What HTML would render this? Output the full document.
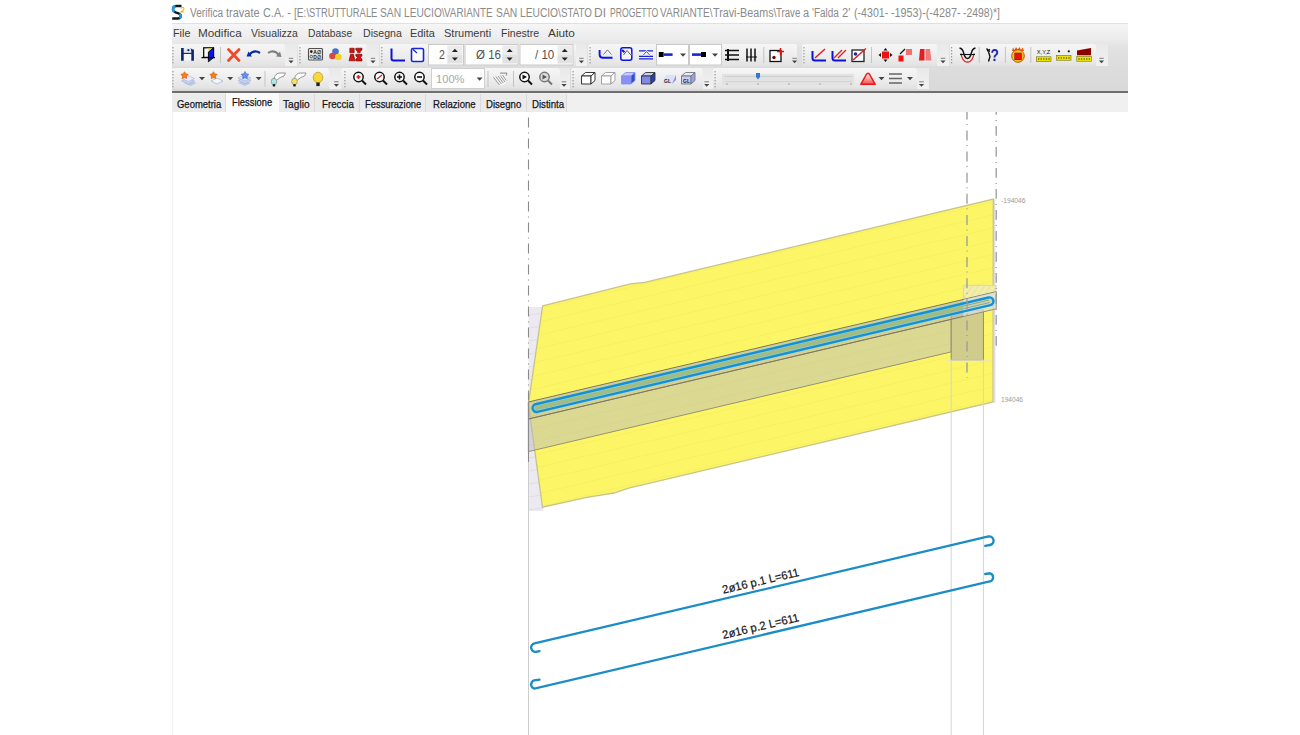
<!DOCTYPE html><html><head><meta charset="utf-8"><style>
html,body{margin:0;padding:0;width:1300px;height:735px;overflow:hidden;background:#fff;}
body{position:relative;font-family:"Liberation Sans", sans-serif;}
.t{position:absolute;white-space:pre;transform-origin:0 0;line-height:1;}
.a{position:absolute;}
svg{position:absolute;left:0;top:0;}
</style></head><body>
<div class="a" style="left:172px;top:0;width:956px;height:23px;background:#fff;"></div>
<div class="a" style="left:172px;top:23px;width:956px;height:68px;background:linear-gradient(#f6f6f6 0px,#ececec 14px,#e2e2e2 24px,#dddddd 40px,#d9d9d9 68px);border-top:1px solid #e0e0e0;box-sizing:border-box;"></div>
<div class="a" style="left:172px;top:91px;width:956px;height:2px;background:#6e6e6e;"></div>
<div class="a" style="left:172px;top:93px;width:956px;height:19px;background:#f0f0f0;"></div>
<div class="a" style="left:172px;top:112px;width:1px;height:623px;background:#f0f0f0;"></div>
<div class="a" style="left:172px;top:44px;width:113px;height:22px;background:linear-gradient(#f6f6f6,#ececec 60%,#e2e2e2);border-radius:2px;"></div>
<div class="a" style="left:298px;top:44px;width:69px;height:22px;background:linear-gradient(#f6f6f6,#ececec 60%,#e2e2e2);border-radius:2px;"></div>
<div class="a" style="left:380px;top:44px;width:196px;height:22px;background:linear-gradient(#f6f6f6,#ececec 60%,#e2e2e2);border-radius:2px;"></div>
<div class="a" style="left:588px;top:44px;width:209px;height:22px;background:linear-gradient(#f6f6f6,#ececec 60%,#e2e2e2);border-radius:2px;"></div>
<div class="a" style="left:802px;top:44px;width:135px;height:22px;background:linear-gradient(#f6f6f6,#ececec 60%,#e2e2e2);border-radius:2px;"></div>
<div class="a" style="left:950px;top:44px;width:146px;height:22px;background:linear-gradient(#f6f6f6,#ececec 60%,#e2e2e2);border-radius:2px;"></div>
<div class="a" style="left:285px;top:44px;width:12px;height:22px;background:linear-gradient(#e9e9e9,#f1f1f1);"></div>
<div class="a" style="left:367px;top:44px;width:12px;height:22px;background:linear-gradient(#e9e9e9,#f1f1f1);"></div>
<div class="a" style="left:576px;top:44px;width:11px;height:22px;background:linear-gradient(#e9e9e9,#f1f1f1);"></div>
<div class="a" style="left:937px;top:44px;width:12px;height:22px;background:linear-gradient(#e9e9e9,#f1f1f1);"></div>
<div class="a" style="left:1096px;top:44px;width:12px;height:22px;background:linear-gradient(#e9e9e9,#f1f1f1);"></div>
<div class="a" style="left:172px;top:68px;width:157px;height:21px;background:linear-gradient(#f6f6f6,#ececec 60%,#e2e2e2);border-radius:2px;"></div>
<div class="a" style="left:341px;top:68px;width:219px;height:21px;background:linear-gradient(#f6f6f6,#ececec 60%,#e2e2e2);border-radius:2px;"></div>
<div class="a" style="left:571px;top:68px;width:132px;height:21px;background:linear-gradient(#f6f6f6,#ececec 60%,#e2e2e2);border-radius:2px;"></div>
<div class="a" style="left:713px;top:68px;width:204px;height:21px;background:linear-gradient(#f6f6f6,#ececec 60%,#e2e2e2);border-radius:2px;"></div>
<div class="a" style="left:329px;top:68px;width:12px;height:21px;background:linear-gradient(#e9e9e9,#f1f1f1);"></div>
<div class="a" style="left:560px;top:68px;width:10px;height:21px;background:linear-gradient(#e9e9e9,#f1f1f1);"></div>
<div class="a" style="left:703px;top:68px;width:10px;height:21px;background:linear-gradient(#e9e9e9,#f1f1f1);"></div>
<div class="a" style="left:917px;top:68px;width:12px;height:21px;background:linear-gradient(#e9e9e9,#f1f1f1);"></div>
<svg width="1300" height="735" viewBox="0 0 1300 735" style="z-index:2"><rect x="172.3" y="47" width="1.2" height="1.4" fill="#9a9a9a"/><rect x="172.3" y="50" width="1.2" height="1.4" fill="#9a9a9a"/><rect x="172.3" y="53" width="1.2" height="1.4" fill="#9a9a9a"/><rect x="172.3" y="56" width="1.2" height="1.4" fill="#9a9a9a"/><rect x="172.3" y="59" width="1.2" height="1.4" fill="#9a9a9a"/><rect x="172.3" y="62" width="1.2" height="1.4" fill="#9a9a9a"/><rect x="183" y="48.5" width="9.5" height="12" fill="#f4f6fa"/><rect x="183.5" y="48.5" width="8" height="4.8" fill="#dfe8f4"/><path d="M182.4,48 V60.8 M192.6,49.5 V60.8" stroke="#0c2470" stroke-width="2.6"/><path d="M190.5,48 L194,51 L191.5,51 Z" fill="#0c2470"/><line x1="183" y1="53.4" x2="192" y2="53.4" stroke="#0c2470" stroke-width="1.1"/><circle cx="188.4" cy="50.2" r="1.1" fill="#0c2470"/><rect x="203.7" y="47.8" width="9.8" height="9.6" fill="#f8f8ff" stroke="#000" stroke-width="1.2"/><path d="M206.5,48.4 L211.5,48.4 L209.5,50.8 Z" fill="#f0f000"/><path d="M208.4,52 L213.6,47.8 V57.6 L208.4,61.8 Z" fill="#0a14f0" stroke="#000" stroke-width="0.9"/><line x1="201.5" y1="57.6" x2="215" y2="57.6" stroke="#000" stroke-width="1.3"/><line x1="220.5" y1="47" x2="220.5" y2="63" stroke="#c4c4c4" stroke-width="1"/><path d="M228.5,49.5 L239,60.5 M239,49.5 L228.5,60.5" stroke="#f04a2a" stroke-width="2.8" stroke-linecap="round"/><path d="M249,55 Q254,49 260,53" fill="none" stroke="#0c2c9a" stroke-width="2.2"/><path d="M246.5,56.5 L252,56.5 L248.5,51.5 Z" fill="#0c2c9a"/><path d="M268,53 Q274,49 279,55" fill="none" stroke="#808080" stroke-width="2"/><path d="M281.5,57 L276,56.5 L280,51.5 Z" fill="#808080"/><line x1="288.7" y1="58.3" x2="293.3" y2="58.3" stroke="#666" stroke-width="0.8"/><path d="M288.4,60.4 L293.6,60.4 L291,63.3 Z" fill="#444"/><rect x="299.3" y="47" width="1.2" height="1.4" fill="#9a9a9a"/><rect x="299.3" y="50" width="1.2" height="1.4" fill="#9a9a9a"/><rect x="299.3" y="53" width="1.2" height="1.4" fill="#9a9a9a"/><rect x="299.3" y="56" width="1.2" height="1.4" fill="#9a9a9a"/><rect x="299.3" y="59" width="1.2" height="1.4" fill="#9a9a9a"/><rect x="299.3" y="62" width="1.2" height="1.4" fill="#9a9a9a"/><rect x="308.5" y="48.5" width="14" height="11.5" rx="1" fill="#e6e6e6" stroke="#505050" stroke-width="1.1"/><circle cx="311.3" cy="51.6" r="1.3" fill="#111"/><circle cx="311.3" cy="56.6" r="1.3" fill="none" stroke="#222" stroke-width="0.7"/><text x="313.3" y="53.6" font-family="Liberation Sans" font-weight="bold" font-size="5" fill="#111" textLength="7.5" lengthAdjust="spacingAndGlyphs">A∅</text><text x="313.3" y="58.6" font-family="Liberation Sans" font-weight="bold" font-size="5" fill="#222" textLength="7.5" lengthAdjust="spacingAndGlyphs">D∅</text><circle cx="335.5" cy="51.5" r="3.3" fill="#4a70c8"/><circle cx="332.5" cy="56" r="3.3" fill="#d84848"/><circle cx="338.5" cy="57" r="3.3" fill="#f2d420"/><path d="M349.8,48.2 h4.4 v4.6 h-4.4 z M350.5,54.3 h3 l1.5,6.5 h-6 z M355.8,48.2 h6.2 v1.8 l-1.8,1.5 v1.3 h-2.6 v-1.3 l-1.8,-1.5 z M355.8,54.3 h6.2 v1.6 l-1.8,1.6 l1.8,1.6 v1.9 h-6.2 v-1.9 l1.8,-1.6 l-1.8,-1.6 z" fill="#e80a0a" stroke="#300" stroke-width="0.5"/><line x1="370.7" y1="58.3" x2="375.3" y2="58.3" stroke="#666" stroke-width="0.8"/><path d="M370.4,60.4 L375.6,60.4 L373,63.3 Z" fill="#444"/><rect x="381.2" y="47" width="1.2" height="1.4" fill="#9a9a9a"/><rect x="381.2" y="50" width="1.2" height="1.4" fill="#9a9a9a"/><rect x="381.2" y="53" width="1.2" height="1.4" fill="#9a9a9a"/><rect x="381.2" y="56" width="1.2" height="1.4" fill="#9a9a9a"/><rect x="381.2" y="59" width="1.2" height="1.4" fill="#9a9a9a"/><rect x="381.2" y="62" width="1.2" height="1.4" fill="#9a9a9a"/><path d="M391.5,48.5 V58.5 Q391.5,60.5 393.5,60.5 H405" fill="none" stroke="#0a14d8" stroke-width="2"/><rect x="411.5" y="48.5" width="12" height="13" rx="1.5" fill="#fff" stroke="#1428d0" stroke-width="1.6"/><path d="M413,49.5 L417,53" stroke="#1428d0" stroke-width="1.2"/><rect x="428.5" y="44.5" width="35" height="20.5" fill="#fff" stroke="#c9c9c9" stroke-width="1"/><rect x="447.3" y="45.5" width="15.199999999999989" height="9" fill="#ececec"/><rect x="447.3" y="54.5" width="15.199999999999989" height="9" fill="#e2e2e2"/><path d="M451.9,52 L457.9,52 L454.9,48.8 Z" fill="#222"/><path d="M451.9,57.5 L457.9,57.5 L454.9,60.7 Z" fill="#222"/><rect x="465.0" y="44.5" width="53.0" height="20.5" fill="#fff" stroke="#c9c9c9" stroke-width="1"/><rect x="502.3" y="45.5" width="14.699999999999989" height="9" fill="#ececec"/><rect x="502.3" y="54.5" width="14.699999999999989" height="9" fill="#e2e2e2"/><path d="M506.65,52 L512.65,52 L509.65,48.8 Z" fill="#222"/><path d="M506.65,57.5 L512.65,57.5 L509.65,60.7 Z" fill="#222"/><rect x="520.0" y="44.5" width="53.0" height="20.5" fill="#fff" stroke="#c9c9c9" stroke-width="1"/><rect x="557.5" y="45.5" width="14.5" height="9" fill="#ececec"/><rect x="557.5" y="54.5" width="14.5" height="9" fill="#e2e2e2"/><path d="M561.75,52 L567.75,52 L564.75,48.8 Z" fill="#222"/><path d="M561.75,57.5 L567.75,57.5 L564.75,60.7 Z" fill="#222"/><line x1="579.1" y1="58.3" x2="583.6999999999999" y2="58.3" stroke="#666" stroke-width="0.8"/><path d="M578.8,60.4 L584.0,60.4 L581.4,63.3 Z" fill="#444"/><rect x="589.5" y="47" width="1.2" height="1.4" fill="#9a9a9a"/><rect x="589.5" y="50" width="1.2" height="1.4" fill="#9a9a9a"/><rect x="589.5" y="53" width="1.2" height="1.4" fill="#9a9a9a"/><rect x="589.5" y="56" width="1.2" height="1.4" fill="#9a9a9a"/><rect x="589.5" y="59" width="1.2" height="1.4" fill="#9a9a9a"/><rect x="589.5" y="62" width="1.2" height="1.4" fill="#9a9a9a"/><path d="M599.6,50 V54.5 Q599.6,57.8 603,57.8 H612.5" fill="none" stroke="#0a14e8" stroke-width="1.9"/><path d="M603.5,54.5 L607.5,49.8 L611.5,54.5" fill="none" stroke="#fff" stroke-width="2.2"/><path d="M603.5,54.5 L607.5,49.8 L611.5,54.5" fill="none" stroke="#555" stroke-width="0.9"/><rect x="620.8" y="47.8" width="11" height="12.5" rx="2" fill="#f4f4fa" stroke="#0a14e0" stroke-width="1.5"/><path d="M622,50 L625.5,53" stroke="#0a14e0" stroke-width="2.2"/><path d="M623.5,55 L627,50.5 L631,55" fill="none" stroke="#fff" stroke-width="2"/><path d="M623.5,55 L627,50.5 L631,55" fill="none" stroke="#444" stroke-width="0.9"/><path d="M639,50.8 h14 M639,56.3 h14 M639,58.8 h14" stroke="#1a22d8" stroke-width="1.3"/><path d="M643,55.5 L646.5,51.5 L650,55.5" fill="none" stroke="#fff" stroke-width="2"/><path d="M643,55.5 L646.5,51.5 L650,55.5" fill="none" stroke="#444" stroke-width="0.9"/><rect x="656.5" y="44.5" width="32" height="20.5" fill="#fff" stroke="#c9c9c9"/><rect x="689.5" y="44.5" width="32" height="20.5" fill="#fff" stroke="#c9c9c9"/><rect x="658.8" y="52" width="4.8" height="5" fill="#000"/><rect x="663.6" y="53.3" width="9" height="2.6" fill="#1a28d0"/><path d="M680,53.5 L686,53.5 L683,56.8 Z" fill="#444"/><rect x="692" y="53.3" width="9" height="2.6" fill="#1a28d0"/><rect x="701" y="52" width="5" height="5" fill="#000"/><path d="M712,53.5 L718,53.5 L715,56.8 Z" fill="#444"/><path d="M725,50.5 h14 M725,55 h14 M725,59.5 h14" stroke="#111" stroke-width="1.5"/><path d="M728,49 v12" stroke="#111" stroke-width="2"/><path d="M747,48.5 v13 M751,48.5 v13 M755,48.5 v13" stroke="#111" stroke-width="1.5"/><path d="M746,57 h11" stroke="#111" stroke-width="1"/><line x1="763.8" y1="47" x2="763.8" y2="63" stroke="#c4c4c4" stroke-width="1"/><rect x="770" y="50.5" width="11" height="11" fill="#fff" stroke="#111" stroke-width="1.3"/><circle cx="774" cy="57.5" r="1.7" fill="#700"/><path d="M780.5,48 v7 M777,51.5 h7" stroke="#e01010" stroke-width="1.5"/><line x1="792.3000000000001" y1="58.3" x2="796.9" y2="58.3" stroke="#666" stroke-width="0.8"/><path d="M792.0,60.4 L797.2,60.4 L794.6,63.3 Z" fill="#444"/><rect x="803.3" y="47" width="1.2" height="1.4" fill="#9a9a9a"/><rect x="803.3" y="50" width="1.2" height="1.4" fill="#9a9a9a"/><rect x="803.3" y="53" width="1.2" height="1.4" fill="#9a9a9a"/><rect x="803.3" y="56" width="1.2" height="1.4" fill="#9a9a9a"/><rect x="803.3" y="59" width="1.2" height="1.4" fill="#9a9a9a"/><rect x="803.3" y="62" width="1.2" height="1.4" fill="#9a9a9a"/><path d="M812.5,51 V58 Q812.5,60.5 815,60.5 H826" fill="none" stroke="#0a14d8" stroke-width="2"/><path d="M815,58 L825,49" stroke="#e02020" stroke-width="1.5"/><path d="M832.5,51 V58 Q832.5,60.5 835,60.5 H846" fill="none" stroke="#0a14d8" stroke-width="2"/><path d="M834,58 L842,50 M838,58 L846,50" stroke="#e02020" stroke-width="1.3"/><rect x="852" y="50" width="12" height="11.5" fill="#fff" stroke="#222" stroke-width="1.3"/><circle cx="855.5" cy="54" r="1.8" fill="#1030a0"/><path d="M853,60 L866,48.5" stroke="#e02020" stroke-width="1.6"/><line x1="871.5" y1="47" x2="871.5" y2="63" stroke="#c4c4c4" stroke-width="1"/><rect x="882" y="51.5" width="7" height="7" fill="#f01010"/><path d="M885.5,48 l-2,2.5 h4 z M885.5,62 l-2,-2.5 h4 z M878.5,55 l2.5,-2 v4 z M892.5,55 l-2.5,-2 v4 z" fill="#111"/><rect x="898.5" y="55.5" width="5" height="6" fill="#f01010"/><rect x="906" y="49" width="6" height="6" fill="#f07070"/><path d="M900,54 L905,49" stroke="#111" stroke-width="1.3"/><path d="M919,60.5 L920,49 H924.5 V60.5 Z" fill="#e02020"/><path d="M925.5,60.5 V49 H930 L931.5,60.5 Z" fill="#f07a7a"/><line x1="940.7" y1="58.3" x2="945.3" y2="58.3" stroke="#666" stroke-width="0.8"/><path d="M940.4,60.4 L945.6,60.4 L943,63.3 Z" fill="#444"/><rect x="951.0" y="47" width="1.2" height="1.4" fill="#9a9a9a"/><rect x="951.0" y="50" width="1.2" height="1.4" fill="#9a9a9a"/><rect x="951.0" y="53" width="1.2" height="1.4" fill="#9a9a9a"/><rect x="951.0" y="56" width="1.2" height="1.4" fill="#9a9a9a"/><rect x="951.0" y="59" width="1.2" height="1.4" fill="#9a9a9a"/><rect x="951.0" y="62" width="1.2" height="1.4" fill="#9a9a9a"/><path d="M961,53.5 Q962.5,62.5 967.5,62 Q972.5,62.5 974,53.5" fill="none" stroke="#e82020" stroke-width="1.3"/><path d="M959.5,48 Q962.5,48.5 963.5,52.5 Q965,58.5 967.5,58.5 Q970,58.5 971.5,52.5 Q972.5,48.5 975.5,48" fill="none" stroke="#111" stroke-width="1.4"/><path d="M960,54.5 h15" stroke="#111" stroke-width="1.1"/><line x1="979.2" y1="47" x2="979.2" y2="63" stroke="#c4c4c4" stroke-width="1"/><text x="990.5" y="61.5" font-family="Liberation Sans" font-weight="bold" font-size="16" fill="#1424b8" transform="translate(990.5,0) scale(0.85,1) translate(-990.5,0)">?</text><path d="M986.5,48.5 L989.5,52 M987,51 L990,49.5 M988.5,52 L990,56.5 L988.5,61.5" fill="none" stroke="#111" stroke-width="1.4"/><line x1="1005.4" y1="47" x2="1005.4" y2="63" stroke="#c4c4c4" stroke-width="1"/><path d="M1012,51 L1013,47.5 L1014.5,50 L1016,47 L1017.8,49.8 L1019.5,47 L1021,50 L1022.8,47.5 L1024,51 Z" fill="#f05010"/><circle cx="1018" cy="56" r="6.3" fill="#f8c818" stroke="#c04010" stroke-width="0.9"/><rect x="1014.8" y="53" width="6.6" height="6.8" fill="#f01010" stroke="#600" stroke-width="0.5"/><line x1="1030.8" y1="47" x2="1030.8" y2="63" stroke="#c4c4c4" stroke-width="1"/><text x="1036.8" y="54.3" font-family="Liberation Sans" font-size="6.2" fill="#111" textLength="13.5" lengthAdjust="spacingAndGlyphs">X,Y,Z</text><rect x="1036.5" y="56.8" width="14.5" height="4.6" fill="#f0e800" stroke="#707000" stroke-width="0.6"/><rect x="1038.0" y="58.099999999999994" width="1.3" height="2" fill="#8a7a00"/><rect x="1040.6" y="58.099999999999994" width="1.3" height="2" fill="#8a7a00"/><rect x="1043.2" y="58.099999999999994" width="1.3" height="2" fill="#8a7a00"/><rect x="1045.8" y="58.099999999999994" width="1.3" height="2" fill="#8a7a00"/><rect x="1048.4" y="58.099999999999994" width="1.3" height="2" fill="#8a7a00"/><circle cx="1059" cy="51.3" r="1.1" fill="#111"/><circle cx="1068.8" cy="51.3" r="1.1" fill="#111"/><rect x="1056.5" y="55.6" width="14.5" height="4.6" fill="#f0e800" stroke="#707000" stroke-width="0.6"/><rect x="1058.0" y="56.9" width="1.3" height="2" fill="#8a7a00"/><rect x="1060.6" y="56.9" width="1.3" height="2" fill="#8a7a00"/><rect x="1063.2" y="56.9" width="1.3" height="2" fill="#8a7a00"/><rect x="1065.8" y="56.9" width="1.3" height="2" fill="#8a7a00"/><rect x="1068.4" y="56.9" width="1.3" height="2" fill="#8a7a00"/><path d="M1077,50.5 L1091,48 V55.3 H1077 Z" fill="#8c0000"/><rect x="1076.8" y="56.6" width="14.5" height="4.6" fill="#f0e800" stroke="#707000" stroke-width="0.6"/><rect x="1078.3" y="57.9" width="1.3" height="2" fill="#8a7a00"/><rect x="1080.9" y="57.9" width="1.3" height="2" fill="#8a7a00"/><rect x="1083.5" y="57.9" width="1.3" height="2" fill="#8a7a00"/><rect x="1086.1" y="57.9" width="1.3" height="2" fill="#8a7a00"/><rect x="1088.7" y="57.9" width="1.3" height="2" fill="#8a7a00"/><line x1="1099.2" y1="58.3" x2="1103.8" y2="58.3" stroke="#666" stroke-width="0.8"/><path d="M1098.9,60.4 L1104.1,60.4 L1101.5,63.3 Z" fill="#444"/><rect x="172.3" y="71" width="1.2" height="1.4" fill="#9a9a9a"/><rect x="172.3" y="74" width="1.2" height="1.4" fill="#9a9a9a"/><rect x="172.3" y="77" width="1.2" height="1.4" fill="#9a9a9a"/><rect x="172.3" y="80" width="1.2" height="1.4" fill="#9a9a9a"/><rect x="172.3" y="83" width="1.2" height="1.4" fill="#9a9a9a"/><rect x="172.3" y="86" width="1.2" height="1.4" fill="#9a9a9a"/><path d="M183.5,83.0 l6,-3 l7,3 l-6,3 z" fill="#b8c8e8"/><path d="M181.5,81 l6,-3 l7,3 l-6,3 z" fill="#c8d4f0" stroke="#9fb0d8" stroke-width="0.6"/><path d="M181.5,78.5 l6,-3 l7,3 l-6,3 z" fill="#e8eef8" stroke="#9fb0d8" stroke-width="0.6"/><polygon points="184.50,71.70 185.73,73.81 188.11,74.33 186.49,76.15 186.73,78.57 184.50,77.59 182.27,78.57 182.51,76.15 180.89,74.33 183.27,73.81" fill="#f88010" stroke="#d04000" stroke-width="0.5"/><path d="M199,77.0 L205,77.0 L202,80.3 Z" fill="#444"/><path d="M211,81 l6,-3 l6,3 l-6,3 z" fill="#f4f6fc" stroke="#a8b8d8" stroke-width="0.8"/><polygon points="213.50,71.70 214.73,73.81 217.11,74.33 215.49,76.15 215.73,78.57 213.50,77.59 211.27,78.57 211.51,76.15 209.89,74.33 212.27,73.81" fill="#f88010" stroke="#d04000" stroke-width="0.5"/><path d="M227.2,77.0 L233.2,77.0 L230.2,80.3 Z" fill="#444"/><path d="M238,83 l6,-3 l7,3 l-6,3 z" fill="#b8c8e8"/><path d="M238,80.5 l6,-3 l7,3 l-6,3 z" fill="#c8d4f0" stroke="#9fb0d8" stroke-width="0.6"/><path d="M238,78 l6,-3 l7,3 l-6,3 z" fill="#dce6f8" stroke="#9fb0d8" stroke-width="0.6"/><polygon points="245.00,71.50 246.29,73.72 248.80,74.26 247.09,76.18 247.35,78.74 245.00,77.70 242.65,78.74 242.91,76.18 241.20,74.26 243.71,73.72" fill="#6890f0" stroke="#3050c0" stroke-width="0.5"/><path d="M255.7,77.0 L261.7,77.0 L258.7,80.3 Z" fill="#444"/><line x1="265" y1="71" x2="265" y2="87" stroke="#c4c4c4" stroke-width="1"/><path d="M274,79 Q275,73 280,73 H285.5 L284,76 Q280,77 277,80" fill="#fff" stroke="#8a8a8a" stroke-width="0.9"/><ellipse cx="274" cy="81.5" rx="2.8" ry="3.2" fill="#a8e8e8" stroke="#666" stroke-width="0.5"/><rect x="272.8" y="84.2" width="2.4" height="2.2" fill="#111"/><path d="M294.5,79 Q295.5,73 300.5,73 H306.0 L304.5,76 Q300.5,77 297.5,80" fill="#fff" stroke="#8a8a8a" stroke-width="0.9"/><ellipse cx="294.5" cy="81.5" rx="2.8" ry="3.2" fill="#f8e060" stroke="#666" stroke-width="0.5"/><rect x="293.3" y="84.2" width="2.4" height="2.2" fill="#111"/><ellipse cx="318" cy="77.5" rx="4.8" ry="5.3" fill="#f8d838" stroke="#b08010" stroke-width="0.6"/><rect x="316.3" y="82.5" width="3.4" height="3.6" fill="#222"/><line x1="334.09999999999997" y1="81.8" x2="338.7" y2="81.8" stroke="#666" stroke-width="0.8"/><path d="M333.79999999999995,83.89999999999999 L339.0,83.89999999999999 L336.4,86.8 Z" fill="#444"/><rect x="344.3" y="71" width="1.2" height="1.4" fill="#9a9a9a"/><rect x="344.3" y="74" width="1.2" height="1.4" fill="#9a9a9a"/><rect x="344.3" y="77" width="1.2" height="1.4" fill="#9a9a9a"/><rect x="344.3" y="80" width="1.2" height="1.4" fill="#9a9a9a"/><rect x="344.3" y="83" width="1.2" height="1.4" fill="#9a9a9a"/><rect x="344.3" y="86" width="1.2" height="1.4" fill="#9a9a9a"/><circle cx="358.5" cy="77" r="4.7" fill="#fff" stroke="#111" stroke-width="1.5"/><path d="M362,80.5 L366,84.5" stroke="#111" stroke-width="2"/><path d="M356.5,77 h4 M358.5,75 v4" stroke="#d02020" stroke-width="1.6"/><circle cx="379.5" cy="77" r="4.7" fill="#fff" stroke="#111" stroke-width="1.5"/><path d="M383,80.5 L387,84.5" stroke="#111" stroke-width="2"/><path d="M377,79 L382,75" stroke="#d02020" stroke-width="1.2"/><circle cx="399.5" cy="77" r="4.7" fill="#fff" stroke="#111" stroke-width="1.5"/><path d="M403,80.5 L407,84.5" stroke="#111" stroke-width="2"/><path d="M397,77 h5 M399.5,74.5 v5" stroke="#111" stroke-width="1.6"/><circle cx="419.5" cy="77" r="4.7" fill="#fff" stroke="#111" stroke-width="1.5"/><path d="M423,80.5 L427,84.5" stroke="#111" stroke-width="2"/><path d="M417,77 h5" stroke="#111" stroke-width="1.6"/><rect x="431.5" y="68.5" width="53" height="20" fill="#fff" stroke="#cfcfcf"/><path d="M476.6,77.5 L482.6,77.5 L479.6,80.8 Z" fill="#444"/><line x1="488" y1="71" x2="488" y2="87" stroke="#c4c4c4" stroke-width="1"/><path d="M493.5,77 L500,85.5 L504,85 L507,81 L506,77 L503,73.5 L500,74.5 Z" fill="#f4f4f4"/><path d="M493.5,77.3 L499.5,85 M495.8,76.5 L501.5,84 M498,76 L503.3,83 M500.3,75.5 L505,82 M502.5,75 L506.3,80.5" stroke="#8c8c8c" stroke-width="0.9"/><path d="M500,73.2 H506.5 V75.5" fill="none" stroke="#9a9a9a" stroke-width="1.3"/><line x1="513.5" y1="71" x2="513.5" y2="87" stroke="#c4c4c4" stroke-width="1"/><circle cx="524.5" cy="77" r="4.7" fill="#fff" stroke="#111" stroke-width="1.5"/><path d="M528,80.5 L532,84.5" stroke="#111" stroke-width="2"/><path d="M522.5,74.5 L527,77 L522.5,79.5 Z" fill="#111"/><circle cx="544.5" cy="77" r="4.7" fill="#ddd" stroke="#777" stroke-width="1.5"/><path d="M548,80.5 L552,84.5" stroke="#777" stroke-width="2"/><path d="M542.5,74.5 L547,77 L542.5,79.5 Z" fill="#555"/><line x1="561.7" y1="81.8" x2="566.3" y2="81.8" stroke="#666" stroke-width="0.8"/><path d="M561.4,83.89999999999999 L566.6,83.89999999999999 L564,86.8 Z" fill="#444"/><rect x="572.5" y="71" width="1.2" height="1.4" fill="#9a9a9a"/><rect x="572.5" y="74" width="1.2" height="1.4" fill="#9a9a9a"/><rect x="572.5" y="77" width="1.2" height="1.4" fill="#9a9a9a"/><rect x="572.5" y="80" width="1.2" height="1.4" fill="#9a9a9a"/><rect x="572.5" y="83" width="1.2" height="1.4" fill="#9a9a9a"/><rect x="572.5" y="86" width="1.2" height="1.4" fill="#9a9a9a"/><path d="M581.5,76 L585.5,72.5 H595.0 L591.0,76 Z" fill="#fff" stroke="#222" stroke-width="0.9"/><path d="M581.5,76 H591.0 V84 H581.5 Z" fill="#fff" stroke="#222" stroke-width="0.9"/><path d="M591.0,76 L595.0,72.5 V80.5 L591.0,84 Z" fill="#fff" stroke="#222" stroke-width="0.9"/><path d="M601.5,76 L605.5,72.5 H615.0 L611.0,76 Z" fill="#fff" stroke="#999" stroke-width="0.9"/><path d="M601.5,76 H611.0 V84 H601.5 Z" fill="#fff" stroke="#999" stroke-width="0.9"/><path d="M611.0,76 L615.0,72.5 V80.5 L611.0,84 Z" fill="#fff" stroke="#999" stroke-width="0.9"/><path d="M621.5,76 L625.5,72.5 H635.0 L631.0,76 Z" fill="#c8ccf8" stroke="#8890f0" stroke-width="0.9"/><path d="M621.5,76 H631.0 V84 H621.5 Z" fill="#8890f0" stroke="#8890f0" stroke-width="0.9"/><path d="M631.0,76 L635.0,72.5 V80.5 L631.0,84 Z" fill="#3050c8" stroke="#8890f0" stroke-width="0.9"/><path d="M641.5,76 L645.5,72.5 H655.0 L651.0,76 Z" fill="#c8ccf8" stroke="#333" stroke-width="0.9"/><path d="M641.5,76 H651.0 V84 H641.5 Z" fill="#8088e8" stroke="#333" stroke-width="0.9"/><path d="M651.0,76 L655.0,72.5 V80.5 L651.0,84 Z" fill="#2840b0" stroke="#333" stroke-width="0.9"/><path d="M662,84 L666,75 H676 L672,84 Z" fill="#dde0fa"/><path d="M672,84 L676,75 V80 Z" fill="#8890e8"/><text x="664" y="82.5" font-family="Liberation Sans" font-size="5" font-weight="bold" fill="#223">GL</text><path d="M681.5,76 L685.5,72.5 H695.0 L691.0,76 Z" fill="#e8eaf8" stroke="#777" stroke-width="0.9"/><path d="M681.5,76 H691.0 V84 H681.5 Z" fill="#c8ccf0" stroke="#777" stroke-width="0.9"/><path d="M691.0,76 L695.0,72.5 V80.5 L691.0,84 Z" fill="#9aa2e8" stroke="#777" stroke-width="0.9"/><text x="683" y="82.5" font-family="Liberation Sans" font-size="5" font-weight="bold" fill="#223">GL</text><line x1="704.4000000000001" y1="81.8" x2="709.0" y2="81.8" stroke="#666" stroke-width="0.8"/><path d="M704.1,83.89999999999999 L709.3000000000001,83.89999999999999 L706.7,86.8 Z" fill="#444"/><rect x="714.5" y="71" width="1.2" height="1.4" fill="#9a9a9a"/><rect x="714.5" y="74" width="1.2" height="1.4" fill="#9a9a9a"/><rect x="714.5" y="77" width="1.2" height="1.4" fill="#9a9a9a"/><rect x="714.5" y="80" width="1.2" height="1.4" fill="#9a9a9a"/><rect x="714.5" y="83" width="1.2" height="1.4" fill="#9a9a9a"/><rect x="714.5" y="86" width="1.2" height="1.4" fill="#9a9a9a"/><rect x="722" y="74" width="132" height="11" fill="#e2e2e2"/><line x1="725" y1="76.5" x2="852" y2="76.5" stroke="#cfcfcf"/><line x1="725" y1="81.5" x2="852" y2="81.5" stroke="#d4d4d4"/><line x1="727" y1="83" x2="727" y2="85" stroke="#9a9a9a" stroke-width="0.8"/><line x1="758" y1="83" x2="758" y2="85" stroke="#9a9a9a" stroke-width="0.8"/><line x1="789" y1="83" x2="789" y2="85" stroke="#9a9a9a" stroke-width="0.8"/><line x1="820" y1="83" x2="820" y2="85" stroke="#9a9a9a" stroke-width="0.8"/><line x1="851" y1="83" x2="851" y2="85" stroke="#9a9a9a" stroke-width="0.8"/><path d="M756,73 h4 v4 l-2,2.5 l-2,-2.5 z" fill="#2a78d8"/><defs><linearGradient id="tg" x1="0" y1="0" x2="0" y2="1"><stop offset="0" stop-color="#fff0f0"/><stop offset="1" stop-color="#f05050"/></linearGradient></defs><path d="M860.8,84.3 L866.3,74.5 Q868,71.8 869.7,74.5 L875.2,84.3 Z" fill="url(#tg)" stroke="#e81818" stroke-width="1.5" stroke-linejoin="round"/><path d="M878.5,77.0 L884.5,77.0 L881.5,80.3 Z" fill="#444"/><path d="M889,74 h13 M889,78.5 h13 M889,83 h13" stroke="#666" stroke-width="1.3"/><path d="M907,77.0 L913,77.0 L910,80.3 Z" fill="#444"/><line x1="919.2" y1="81.8" x2="923.8" y2="81.8" stroke="#666" stroke-width="0.8"/><path d="M918.9,83.89999999999999 L924.1,83.89999999999999 L921.5,86.8 Z" fill="#444"/></svg>
<div class="t" style="left:172.8px;top:27.9px;font-size:10.8px;color:#3c3c3c;transform:scaleX(0.9996);z-index:3;">File</div>
<div class="t" style="left:198.44px;top:27.9px;font-size:10.8px;color:#3c3c3c;transform:scaleX(1.0869);z-index:3;">Modifica</div>
<div class="t" style="left:251.02px;top:27.9px;font-size:10.8px;color:#3c3c3c;transform:scaleX(0.9677);z-index:3;">Visualizza</div>
<div class="t" style="left:308.13px;top:27.9px;font-size:10.8px;color:#3c3c3c;transform:scaleX(0.9547);z-index:3;">Database</div>
<div class="t" style="left:362.62px;top:27.9px;font-size:10.8px;color:#3c3c3c;transform:scaleX(0.9785);z-index:3;">Disegna</div>
<div class="t" style="left:409.89px;top:27.9px;font-size:10.8px;color:#3c3c3c;transform:scaleX(1.0125);z-index:3;">Edita</div>
<div class="t" style="left:443.89px;top:27.9px;font-size:10.8px;color:#3c3c3c;transform:scaleX(1.02);z-index:3;">Strumenti</div>
<div class="t" style="left:501.22px;top:27.9px;font-size:10.8px;color:#3c3c3c;transform:scaleX(0.9784);z-index:3;">Finestre</div>
<div class="t" style="left:547.73px;top:27.9px;font-size:10.8px;color:#3c3c3c;transform:scaleX(1.094);z-index:3;">Aiuto</div>
<div class="a" style="left:172px;top:94px;width:53.80000000000001px;height:17.5px;background:#ebebeb;border-right:1px solid #dadada;box-sizing:border-box;"></div>
<div class="t" style="left:177.1px;top:98.6px;font-size:11px;color:#15151c;transform:scaleX(0.861);z-index:3;-webkit-text-stroke:0.25px #15151c;">Geometria</div>
<div class="a" style="left:225.8px;top:93px;width:53.0px;height:19px;background:#fafafa;"></div>
<div class="t" style="left:232.3px;top:97.1px;font-size:11px;color:#15151c;transform:scaleX(0.8519);z-index:3;-webkit-text-stroke:0.25px #15151c;">Flessione</div>
<div class="a" style="left:278.8px;top:94px;width:36.599999999999966px;height:17.5px;background:#ebebeb;border-right:1px solid #dadada;box-sizing:border-box;"></div>
<div class="t" style="left:283.15px;top:98.6px;font-size:11px;color:#15151c;transform:scaleX(0.9253);z-index:3;-webkit-text-stroke:0.25px #15151c;">Taglio</div>
<div class="a" style="left:315.4px;top:94px;width:44.30000000000001px;height:17.5px;background:#ebebeb;border-right:1px solid #dadada;box-sizing:border-box;"></div>
<div class="t" style="left:321.68px;top:98.6px;font-size:11px;color:#15151c;transform:scaleX(0.8831);z-index:3;-webkit-text-stroke:0.25px #15151c;">Freccia</div>
<div class="a" style="left:359.7px;top:94px;width:66.69999999999999px;height:17.5px;background:#ebebeb;border-right:1px solid #dadada;box-sizing:border-box;"></div>
<div class="t" style="left:365.0px;top:98.6px;font-size:11px;color:#15151c;transform:scaleX(0.8525);z-index:3;-webkit-text-stroke:0.25px #15151c;">Fessurazione</div>
<div class="a" style="left:426.4px;top:94px;width:54.60000000000002px;height:17.5px;background:#ebebeb;border-right:1px solid #dadada;box-sizing:border-box;"></div>
<div class="t" style="left:432.59px;top:98.6px;font-size:11px;color:#15151c;transform:scaleX(0.8714);z-index:3;-webkit-text-stroke:0.25px #15151c;">Relazione</div>
<div class="a" style="left:481px;top:94px;width:46px;height:17.5px;background:#ebebeb;border-right:1px solid #dadada;box-sizing:border-box;"></div>
<div class="t" style="left:485.99px;top:98.6px;font-size:11px;color:#15151c;transform:scaleX(0.873);z-index:3;-webkit-text-stroke:0.25px #15151c;">Disegno</div>
<div class="a" style="left:527px;top:94px;width:40.299999999999955px;height:17.5px;background:#ebebeb;border-right:1px solid #dadada;box-sizing:border-box;"></div>
<div class="t" style="left:532.39px;top:98.6px;font-size:11px;color:#15151c;transform:scaleX(0.876);z-index:3;-webkit-text-stroke:0.25px #15151c;">Distinta</div>
<div class="t" style="left:190.0px;top:6.64px;font-size:12px;color:#8a8a8a;transform:scaleX(0.8408);z-index:3;">Verifica </div>
<div class="t" style="left:225.9px;top:6.64px;font-size:12px;color:#8a8a8a;transform:scaleX(0.9169);z-index:3;">travate </div>
<div class="t" style="left:262.6px;top:6.64px;font-size:12px;color:#8a8a8a;transform:scaleX(0.9086);z-index:3;">C.A. - </div>
<div class="t" style="left:293.5px;top:6.64px;font-size:12px;color:#8a8a8a;transform:scaleX(0.8435);z-index:3;">[E:\</div>
<div class="t" style="left:308.7px;top:6.64px;font-size:12px;color:#8a8a8a;transform:scaleX(0.7829);z-index:3;">STRUTTURALE </div>
<div class="t" style="left:379.7px;top:6.64px;font-size:12px;color:#8a8a8a;transform:scaleX(0.8569);z-index:3;">SAN </div>
<div class="t" style="left:403.7px;top:6.64px;font-size:12px;color:#8a8a8a;transform:scaleX(0.8455);z-index:3;">LEUCIO\</div>
<div class="t" style="left:444.3px;top:6.64px;font-size:12px;color:#8a8a8a;transform:scaleX(0.8197);z-index:3;">VARIANTE </div>
<div class="t" style="left:495.5px;top:6.64px;font-size:12px;color:#8a8a8a;transform:scaleX(0.8605);z-index:3;">SAN </div>
<div class="t" style="left:519.6px;top:6.64px;font-size:12px;color:#8a8a8a;transform:scaleX(0.8517);z-index:3;">LEUCIO\</div>
<div class="t" style="left:560.5px;top:6.64px;font-size:12px;color:#8a8a8a;transform:scaleX(0.8149);z-index:3;">STATO </div>
<div class="t" style="left:594.2px;top:6.64px;font-size:12px;color:#8a8a8a;transform:scaleX(0.9974);z-index:3;">DI </div>
<div class="t" style="left:609.5px;top:6.64px;font-size:12px;color:#8a8a8a;transform:scaleX(0.7195);z-index:3;">PROGETTO </div>
<div class="t" style="left:660.2px;top:6.64px;font-size:12px;color:#8a8a8a;transform:scaleX(0.8405);z-index:3;">VARIANTE\</div>
<div class="t" style="left:712.7px;top:6.64px;font-size:12px;color:#8a8a8a;transform:scaleX(0.8956);z-index:3;">Travi-Beams\</div>
<div class="t" style="left:776.2px;top:6.64px;font-size:12px;color:#8a8a8a;transform:scaleX(0.8043);z-index:3;">Trave </div>
<div class="t" style="left:803.2px;top:6.64px;font-size:12px;color:#8a8a8a;transform:scaleX(0.9194);z-index:3;">a </div>
<div class="t" style="left:812.4px;top:6.64px;font-size:12px;color:#8a8a8a;transform:scaleX(0.8302);z-index:3;">'Falda </div>
<div class="t" style="left:842.0px;top:6.64px;font-size:12px;color:#8a8a8a;transform:scaleX(0.934);z-index:3;">2' </div>
<div class="t" style="left:853.5px;top:6.64px;font-size:12px;color:#8a8a8a;transform:scaleX(0.8851);z-index:3;">(-4301- </div>
<div class="t" style="left:890.7px;top:6.64px;font-size:12px;color:#8a8a8a;transform:scaleX(0.8984);z-index:3;">-1953)-(-4287- </div>
<div class="t" style="left:963.2px;top:6.64px;font-size:12px;color:#8a8a8a;transform:scaleX(0.8665);z-index:3;">-2498)*]</div>
<div class="t" style="left:439.3px;top:48.6px;font-size:12.5px;color:#505050;transform:scaleX(0.85);z-index:3;">2</div>
<div class="t" style="left:475.8px;top:48.6px;font-size:12.5px;color:#505050;transform:scaleX(0.92);z-index:3;">Ø 16</div>
<div class="t" style="left:534.5px;top:48.6px;font-size:12.5px;color:#505050;transform:scaleX(0.92);z-index:3;">/ 10</div>
<div class="t" style="left:436px;top:73.6px;font-size:11.5px;color:#a8a8a8;transform:scaleX(0.97);z-index:3;">100%</div>
<svg width="1300" height="735" style="z-index:4"><path d="M181.5,6 H176.3 Q173,6 173,9.3 Q173,11.3 175.5,12.3 L178.5,13.3 Q180.8,14.2 180.8,16 Q180.8,18.5 177.5,18.5 H172.2" fill="none" stroke="#101820" stroke-width="2.4"/><path d="M175.5,6.2 Q173,6.6 173,9.3 Q173,11 174.5,11.8" fill="none" stroke="#1ea0e6" stroke-width="2.4"/><path d="M179.5,13.8 Q180.8,14.6 180.8,16 Q180.8,17.5 179.5,18.1" fill="none" stroke="#1ea0e6" stroke-width="2.4"/><path d="M180.8,8.6 Q181.3,7.3 182.6,7.3 Q184,7.3 184,8.6 Q184,9.8 182.3,11 L181,12 H184.3" fill="none" stroke="#e8b820" stroke-width="1.1"/></svg>
<svg width="1300" height="735" style="z-index:1"><rect x="528.5" y="307" width="15" height="204" fill="#eceaf0"/><line x1="528.5" y1="315" x2="543" y2="313" stroke="#dcdbe2" stroke-width="0.8"/><line x1="528.5" y1="328" x2="543" y2="326" stroke="#dcdbe2" stroke-width="0.8"/><line x1="528.5" y1="341" x2="543" y2="339" stroke="#dcdbe2" stroke-width="0.8"/><line x1="528.5" y1="354" x2="543" y2="352" stroke="#dcdbe2" stroke-width="0.8"/><line x1="528.5" y1="367" x2="543" y2="365" stroke="#dcdbe2" stroke-width="0.8"/><line x1="528.5" y1="380" x2="543" y2="378" stroke="#dcdbe2" stroke-width="0.8"/><line x1="528.5" y1="393" x2="543" y2="391" stroke="#dcdbe2" stroke-width="0.8"/><line x1="528.5" y1="406" x2="543" y2="404" stroke="#dcdbe2" stroke-width="0.8"/><line x1="528.5" y1="419" x2="543" y2="417" stroke="#dcdbe2" stroke-width="0.8"/><line x1="528.5" y1="432" x2="543" y2="430" stroke="#dcdbe2" stroke-width="0.8"/><line x1="528.5" y1="445" x2="543" y2="443" stroke="#dcdbe2" stroke-width="0.8"/><line x1="528.5" y1="458" x2="543" y2="456" stroke="#dcdbe2" stroke-width="0.8"/><line x1="528.5" y1="471" x2="543" y2="469" stroke="#dcdbe2" stroke-width="0.8"/><line x1="528.5" y1="484" x2="543" y2="482" stroke="#dcdbe2" stroke-width="0.8"/><line x1="528.5" y1="497" x2="543" y2="495" stroke="#dcdbe2" stroke-width="0.8"/><line x1="528.5" y1="510" x2="543" y2="508" stroke="#dcdbe2" stroke-width="0.8"/><defs><clipPath id="yc"><polygon points="542.6,305.9 630.5,283.8 644.8,282.4 993.3,199 993,402 628.6,488.2 613.8,493 586.8,497.4 542.5,507.2 528.4,404"/></clipPath></defs><polygon points="542.6,305.9 630.5,283.8 644.8,282.4 993.3,199 993,402 628.6,488.2 613.8,493 586.8,497.4 542.5,507.2 528.4,404" fill="#fcf666"/><path d="M520,-228.0 L1000,-341.2 M520,-214.8 L1000,-328.0 M520,-201.6 L1000,-314.8 M520,-188.4 L1000,-301.6 M520,-175.2 L1000,-288.4 M520,-162.0 L1000,-275.2 M520,-148.8 L1000,-262.0 M520,-135.6 L1000,-248.8 M520,-122.4 L1000,-235.6 M520,-109.2 L1000,-222.4 M520,-96.0 L1000,-209.2 M520,-82.8 L1000,-196.0 M520,-69.6 L1000,-182.8 M520,-56.4 L1000,-169.6 M520,-43.2 L1000,-156.4 M520,-30.0 L1000,-143.2 M520,-16.8 L1000,-130.0 M520,-3.6 L1000,-116.8 M520,9.6 L1000,-103.6 M520,22.8 L1000,-90.4 M520,36.0 L1000,-77.2 M520,49.2 L1000,-64.0 M520,62.4 L1000,-50.8 M520,75.6 L1000,-37.6 M520,88.8 L1000,-24.4 M520,102.0 L1000,-11.2 M520,115.2 L1000,2.0 M520,128.4 L1000,15.2 M520,141.6 L1000,28.4 M520,154.8 L1000,41.6 M520,168.0 L1000,54.8 M520,181.2 L1000,68.0 M520,194.4 L1000,81.2 M520,207.6 L1000,94.4 M520,220.8 L1000,107.6 M520,234.0 L1000,120.8 M520,247.2 L1000,134.0 M520,260.4 L1000,147.2 M520,273.6 L1000,160.4 M520,286.8 L1000,173.6 M520,300.0 L1000,186.8 M520,313.2 L1000,200.0 M520,326.4 L1000,213.2 M520,339.6 L1000,226.4 M520,352.8 L1000,239.6 M520,366.0 L1000,252.8 M520,379.2 L1000,266.0 M520,392.4 L1000,279.2 M520,405.6 L1000,292.4 M520,418.8 L1000,305.6 M520,432.0 L1000,318.8 M520,445.2 L1000,332.0 M520,458.4 L1000,345.2 M520,471.6 L1000,358.4 M520,484.8 L1000,371.6 M520,498.0 L1000,384.8 M520,511.2 L1000,398.0 M520,524.4 L1000,411.2 M520,537.6 L1000,424.4 M520,550.8 L1000,437.6 M520,564.0 L1000,450.8 M520,577.2 L1000,464.0 M520,590.4 L1000,477.2 M520,603.6 L1000,490.4 M520,616.8 L1000,503.6 M520,630.0 L1000,516.8 M520,643.2 L1000,530.0 M520,656.4 L1000,543.2 M520,669.6 L1000,556.4 M520,682.8 L1000,569.6 M520,696.0 L1000,582.8 M520,709.2 L1000,596.0 M520,722.4 L1000,609.2 M520,735.6 L1000,622.4 M520,748.8 L1000,635.6 M520,762.0 L1000,648.8 M520,775.2 L1000,662.0 M520,788.4 L1000,675.2 M520,801.6 L1000,688.4 M520,814.8 L1000,701.6" stroke="#e6de5a" stroke-width="0.9" fill="none" clip-path="url(#yc)" opacity="0.28"/><polygon points="542.6,305.9 630.5,283.8 644.8,282.4 993.3,199 993,402 628.6,488.2 613.8,493 586.8,497.4 542.5,507.2 528.4,404" fill="none" stroke="#c8c38c" stroke-width="1.3"/><line x1="528.5" y1="462" x2="528.5" y2="735" stroke="#cdcdcd" stroke-width="1"/><line x1="951.2" y1="355" x2="951.2" y2="735" stroke="#d4d4d4" stroke-width="1"/><line x1="983.4" y1="355" x2="983.4" y2="735" stroke="#d4d4d4" stroke-width="1"/><line x1="994.7" y1="199" x2="994.7" y2="403" stroke="#dcd8e6" stroke-width="1.2"/><defs><pattern id="hp" width="5" height="5" patternUnits="userSpaceOnUse" patternTransform="rotate(35)"><rect width="5" height="5" fill="#f4eea0"/><line x1="0" y1="0" x2="0" y2="5" stroke="#dcdcc8" stroke-width="1.6"/></pattern></defs><rect x="963.3" y="285.3" width="32.7" height="18" fill="url(#hp)" stroke="#d6d4c4" stroke-width="1"/><polygon points="528.4,419 951.2,319.30 951.2,351.90 528.4,451.6" fill="#bababe" fill-opacity="0.5" stroke="#8c8876" stroke-width="0.9"/><rect x="951.2" y="310" width="32.2" height="50.2" fill="#d0cc8c" stroke="#8a8668" stroke-width="0.9"/><line x1="946" y1="360.2" x2="990" y2="360.2" stroke="#e6e4cc" stroke-width="1"/><polygon points="528.4,402 996.1,291.72 996.1,308.72 528.4,419" fill="#b2b0b6" fill-opacity="0.5" stroke="#7a7664" stroke-width="1"/><g transform="translate(536.5,408.08) rotate(-13.268)"><rect x="-3.9" y="-3.9" width="473.22" height="7.8" rx="3.9" fill="#a0bc82" stroke="#8fd8f0" stroke-width="3.4"/></g><polygon points="963.3,299.45 996.1,291.72 996.1,308.72 963.3,316.45" fill="#ffffff" opacity="0.4"/><g transform="translate(536.5,408.08) rotate(-13.268)"><line x1="438.5" y1="-1.3" x2="465.4" y2="-1.3" stroke="#8a9a78" stroke-width="0.8"/><line x1="438.5" y1="1.3" x2="465.4" y2="1.3" stroke="#8a9a78" stroke-width="0.8"/><rect x="-3.9" y="-3.9" width="473.22" height="7.8" rx="3.9" fill="none" stroke="#1890d0" stroke-width="2.4"/></g><line x1="528.5" y1="117.4" x2="528.5" y2="402" stroke="#8a8a8a" stroke-width="1.1" stroke-dasharray="10 5 1 5"/><line x1="528.5" y1="402" x2="528.5" y2="462" stroke="#8a8a8a" stroke-width="1.1"/><line x1="967" y1="112" x2="967" y2="377.5" stroke="#9a9a9a" stroke-width="1.3" stroke-dasharray="10 4.5 1 5.6" stroke-dashoffset="2.6"/><line x1="996.2" y1="112" x2="996.2" y2="346" stroke="#9a9a9a" stroke-width="1.3" stroke-dasharray="9.7 5.2 1 5.1" stroke-dashoffset="7"/><text x="1001" y="203" font-family="Liberation Sans" font-size="7" fill="#9a9a9a" textLength="24.5" lengthAdjust="spacingAndGlyphs">-194046</text><text x="1001" y="402" font-family="Liberation Sans" font-size="7" fill="#9a9a9a" textLength="22" lengthAdjust="spacingAndGlyphs">194046</text><path d="M539.5,651.2 L536,651.8 A4.27,4.27 0 0 1 534.5,643.4 L988.5,536.5 A4.3,4.3 0 0 1 990,545 L985.2,545.8" fill="none" stroke="#1c8cc8" stroke-width="2.3" stroke-linecap="round"/><path d="M539.5,679.6 L536,680.2 A4.27,4.27 0 0 0 534.5,688.6 L988.5,581.7 A4.3,4.3 0 0 0 990,573.3 L985.2,574" fill="none" stroke="#1c8cc8" stroke-width="2.3" stroke-linecap="round"/><text transform="translate(723.3,593.8) rotate(-13.3)" font-family="Liberation Sans" font-size="11.5" fill="#141414" stroke="#141414" stroke-width="0.2" textLength="78.5" lengthAdjust="spacingAndGlyphs">2ø16 p.1 L=611</text><text transform="translate(723.3,639) rotate(-13.3)" font-family="Liberation Sans" font-size="11.5" fill="#141414" stroke="#141414" stroke-width="0.2" textLength="78.5" lengthAdjust="spacingAndGlyphs">2ø16 p.2 L=611</text></svg>
</body></html>
